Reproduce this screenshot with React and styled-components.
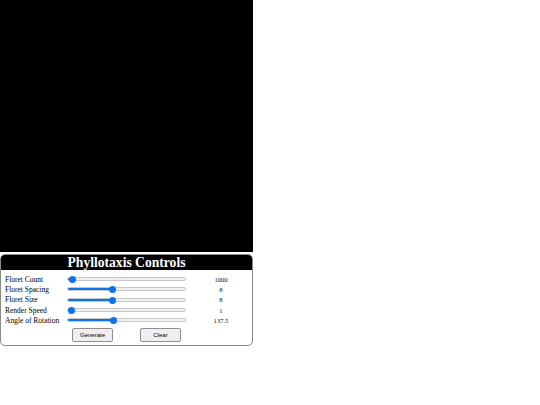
import React, { useState } from "react";
import styled, { createGlobalStyle } from "styled-components";

const Global = createGlobalStyle`
  html, body { margin: 0; padding: 0; background: #fff; }
  body { font-family: "Liberation Serif", "Times New Roman", serif; }
`;

const Page = styled.div`
  width: 253px;
  display: flex;
  flex-direction: column;
  gap: 2px;
`;

const Canvas = styled.div`
  width: 253px;
  height: 252px;
  background: #000;
`;

const Panel = styled.div`
  border: 1px solid #8a8a8a;
  border-radius: 5px;
  overflow: hidden;
  background: #fff;
  padding-bottom: 3px;
`;

const Header = styled.div`
  background: #000;
  color: #fff;
  font-family: "Liberation Serif", "Times New Roman", serif;
  font-weight: bold;
  font-size: 13.6px;
  text-align: center;
  height: 15px;
  line-height: 16px;
`;

const Rows = styled.div`
  padding: 4px 4px 0 4px;
  display: flex;
  flex-direction: column;
`;

const Row = styled.div`
  display: grid;
  grid-template-columns: 62px 119px 1fr;
  align-items: center;
  height: 10.3px;
`;

const Label = styled.span`
  font-family: "Liberation Serif", "Times New Roman", serif;
  font-size: 7.5px;
  color: #000;
  white-space: nowrap;
`;

const Value = styled.span`
  font-family: "Liberation Serif", "Times New Roman", serif;
  font-size: 6.6px;
  text-align: center;
  padding-left: 8px;
  color: #111;
`;

const Range = styled.input.attrs({ type: "range" })`
  -webkit-appearance: none;
  appearance: none;
  margin: 0;
  width: 119px;
  height: 7px;
  background: transparent;
  &::-webkit-slider-runnable-track {
    height: 4px;
    border-radius: 2px;
    border: 0.5px solid #c8c8c8;
    box-sizing: border-box;
    background: linear-gradient(
      to right,
      #0a74e8 0,
      #0a74e8 var(--p),
      #efefef var(--p),
      #efefef 100%
    );
  }
  &::-webkit-slider-thumb {
    -webkit-appearance: none;
    width: 7px;
    height: 7px;
    border-radius: 50%;
    background: #0a74e8;
    border: none;
    margin-top: -2px;
  }
`;

const Buttons = styled.div`
  display: flex;
  justify-content: center;
  gap: 27px;
  margin-top: 3px;
`;

const Button = styled.button`
  width: 41px;
  height: 14px;
  padding: 0;
  font-family: "Liberation Sans", Arial, sans-serif;
  font-size: 6px;
  color: #000;
  background: #efefef;
  border: 1px solid #8f8f8f;
  border-radius: 2px;
`;

const controls = [
  { label: "Floret Count", min: 0, max: 80000, value: 1000 },
  { label: "Floret Spacing", min: 1, max: 20, value: 8 },
  { label: "Floret Size", min: 1, max: 20, value: 8 },
  { label: "Render Speed", min: 1, max: 100, value: 1 },
  { label: "Angle of Rotation", min: 0, max: 360, value: 137.5, step: 0.1 },
];

function Control({ c }) {
  const [v, setV] = useState(c.value);
  const pct = ((v - c.min) / (c.max - c.min)) * 100;
  return (
    <Row>
      <Label>{c.label}</Label>
      <Range
        min={c.min}
        max={c.max}
        step={c.step || 1}
        value={v}
        onChange={(e) => setV(Number(e.target.value))}
        style={{ "--p": `${pct}%` }}
      />
      <Value>{v}</Value>
    </Row>
  );
}

export default function App() {
  return (
    <>
      <Global />
      <Page>
        <Canvas />
        <Panel>
          <Header>Phyllotaxis Controls</Header>
          <Rows>
            {controls.map((c) => (
              <Control key={c.label} c={c} />
            ))}
          </Rows>
          <Buttons>
            <Button>Generate</Button>
            <Button>Clear</Button>
          </Buttons>
        </Panel>
      </Page>
    </>
  );
}
